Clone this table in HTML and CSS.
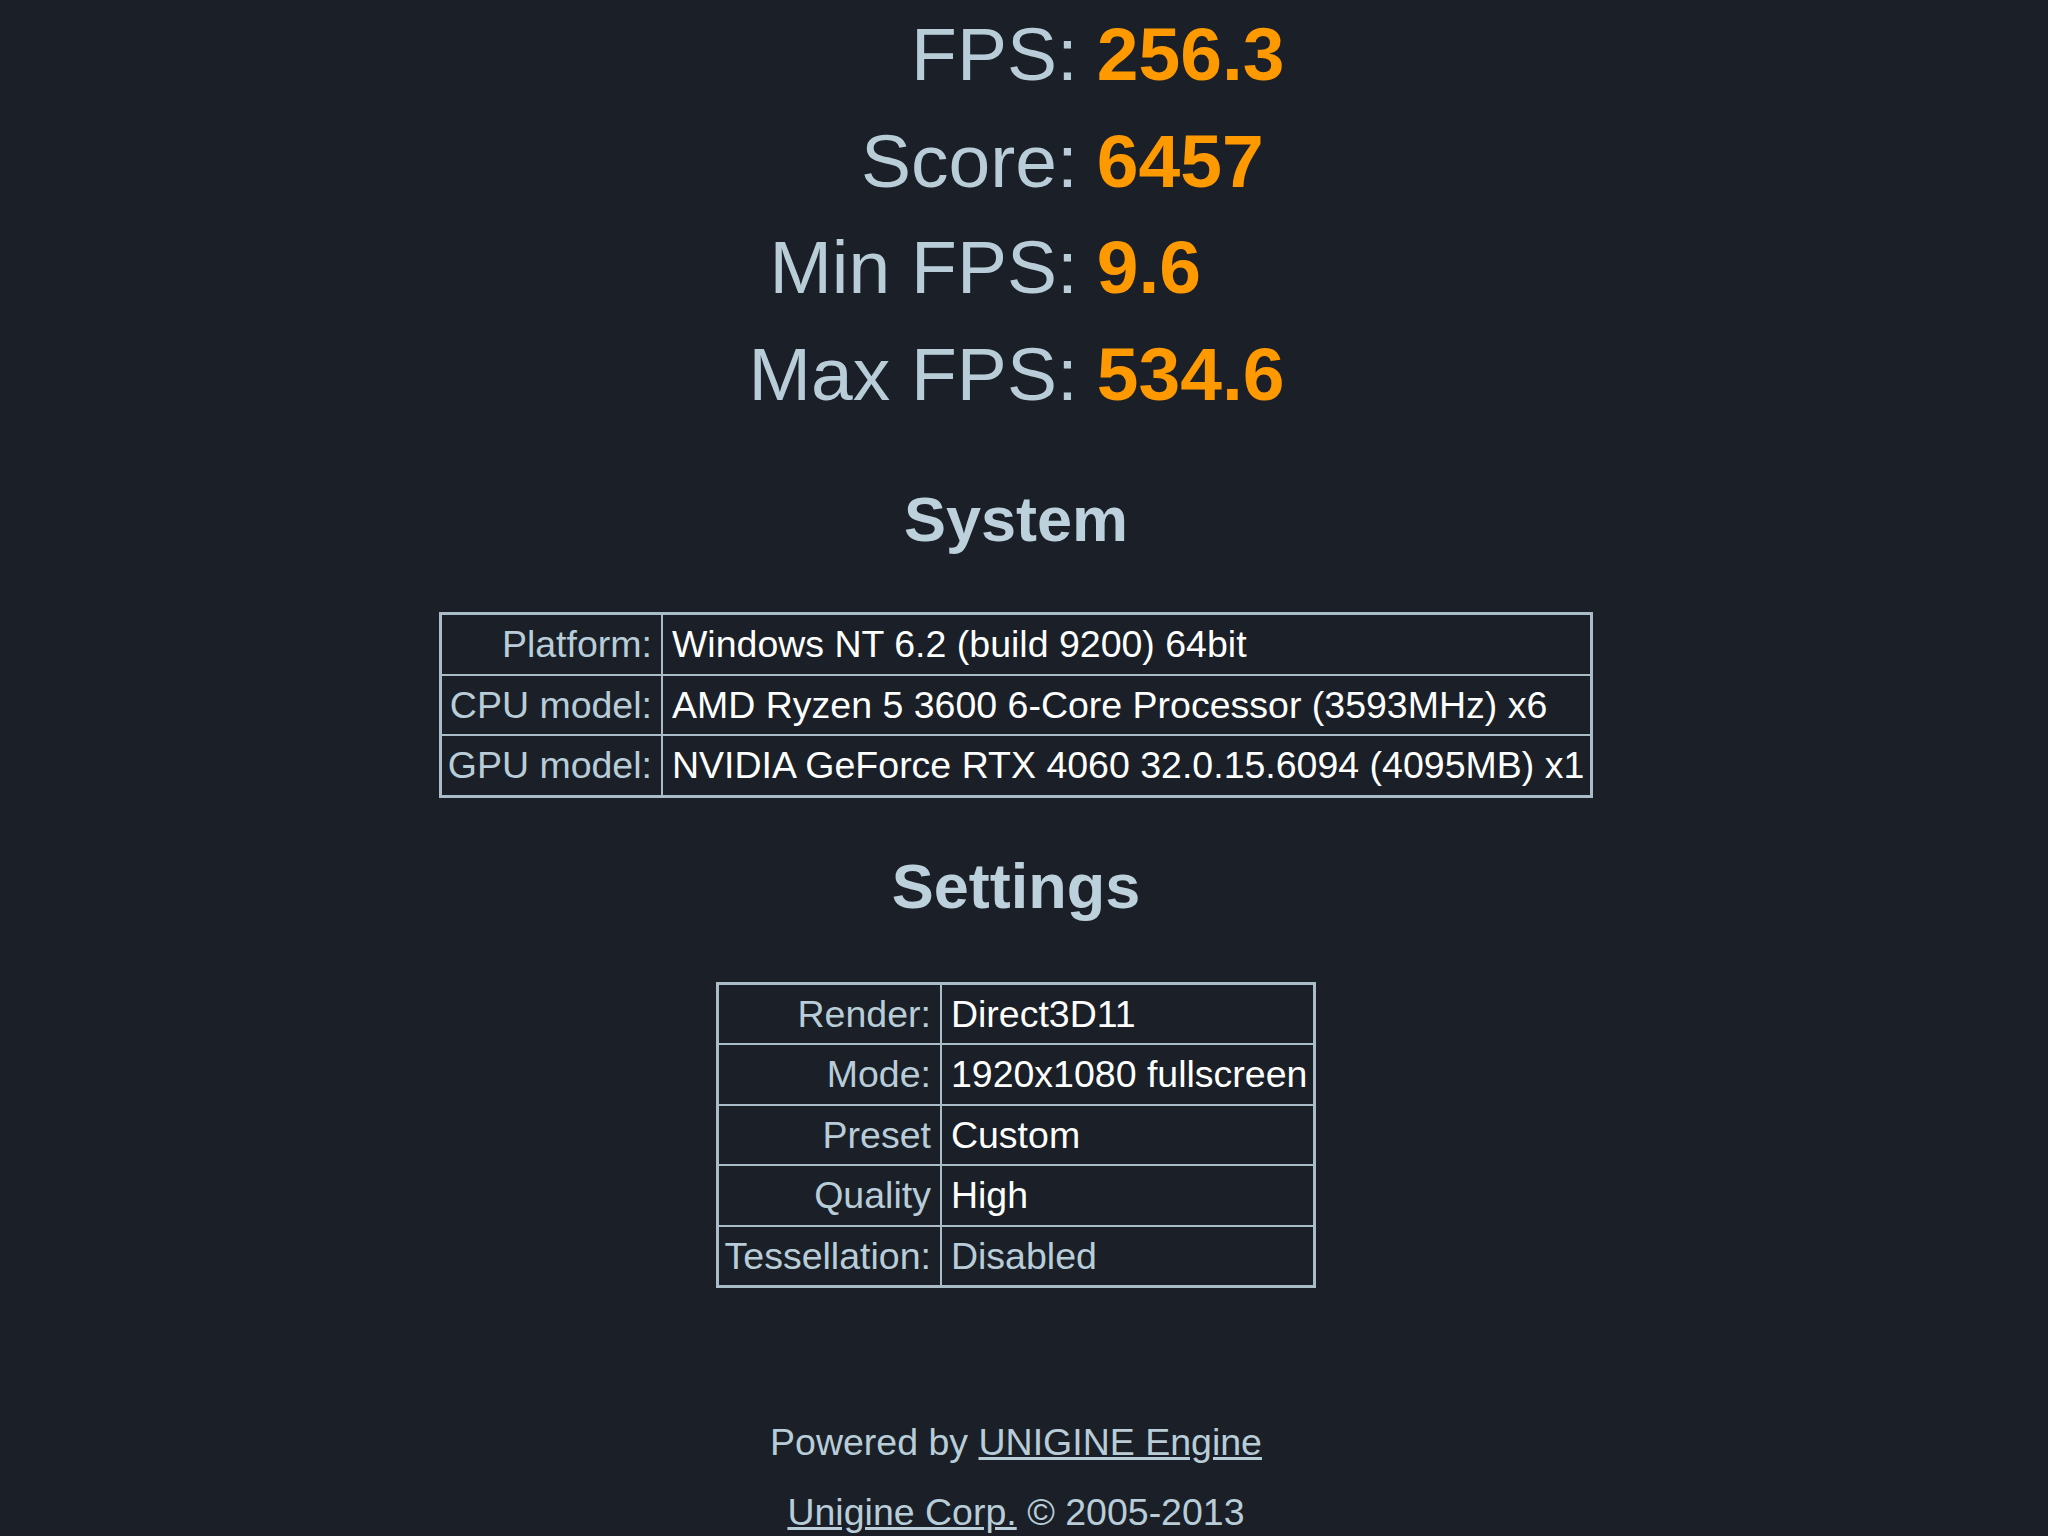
FILE: index.html
```html
<!DOCTYPE html>
<html>
<head>
<meta charset="utf-8">
<title>Benchmark results</title>
<link rel="stylesheet" href="styles.css">
</head>
<body>
<div class="page">
  <div class="stats">
    <div class="stat-label">FPS:</div><div class="stat-value">256.3</div>
    <div class="stat-label">Score:</div><div class="stat-value">6457</div>
    <div class="stat-label">Min FPS:</div><div class="stat-value">9.6</div>
    <div class="stat-label">Max FPS:</div><div class="stat-value">534.6</div>
  </div>

  <h2 class="section-title section-system">System</h2>
  <table class="info">
    <tr><td class="key">Platform:</td><td class="val">Windows NT 6.2 (build 9200) 64bit</td></tr>
    <tr><td class="key">CPU model:</td><td class="val">AMD Ryzen 5 3600 6-Core Processor (3593MHz) x6</td></tr>
    <tr><td class="key">GPU model:</td><td class="val">NVIDIA GeForce RTX 4060 32.0.15.6094 (4095MB) x1</td></tr>
  </table>

  <h2 class="section-title">Settings</h2>
  <table class="info">
    <tr><td class="key">Render:</td><td class="val">Direct3D11</td></tr>
    <tr><td class="key">Mode:</td><td class="val">1920x1080 fullscreen</td></tr>
    <tr><td class="key">Preset</td><td class="val">Custom</td></tr>
    <tr><td class="key">Quality</td><td class="val">High</td></tr>
    <tr><td class="key">Tessellation:</td><td class="val val-muted">Disabled</td></tr>
  </table>

  <div class="footer">
    <p>Powered by <a href="#">UNIGINE Engine</a></p>
    <p><a href="#">Unigine Corp.</a> &copy; 2005-2013</p>
  </div>
</div>
</body>
</html>
```

FILE: styles.css
```css
html, body {
  margin: 0;
  padding: 0;
  background: #1b2028;
  overflow: hidden;
}

body {
  font-family: "Liberation Sans", Arial, sans-serif;
  color: #b9cdd9;
}

.page {
  width: 2032px;
  display: flex;
  flex-direction: column;
  align-items: center;
  padding-top: 1px;
}

.stats {
  display: grid;
  grid-template-columns: auto auto;
  font-size: 75px;
  line-height: 106.5px;
  margin-bottom: 1px;
}

.stat-label {
  text-align: right;
  padding: 0 8px 0 6px;
  color: #b9cdd9;
}

.stat-value {
  text-align: left;
  padding: 0 5px 0 11px;
  color: #ff9900;
  font-weight: bold;
}

.section-title {
  margin: 52px 0 60px;
  font-size: 63px;
  line-height: 72px;
  font-weight: bold;
  color: #bdd1dd;
}

.section-system {
  margin-top: 55px;
  margin-bottom: 57px;
}

.info {
  border: 2px solid #a9bcc8;
  border-collapse: separate;
  border-spacing: 0;
  font-size: 37.5px;
  line-height: 44px;
}

.info td {
  border: 1px solid #a9bcc8;
  white-space: nowrap;
}

.info .key {
  text-align: right;
  padding: 7.25px 9px 7.25px 6px;
  color: #b9cdd9;
}

.info .val {
  text-align: left;
  padding: 7.25px 6px 7.25px 9px;
  color: #ffffff;
}

.info .val-muted {
  color: #b9cdd9;
}

.footer {
  margin-top: 119px;
  font-size: 37.5px;
  line-height: 70px;
  text-align: center;
  color: #b9cdd9;
}

.footer p {
  margin: 0;
}

.footer a {
  color: inherit;
  text-decoration: underline;
}
```
